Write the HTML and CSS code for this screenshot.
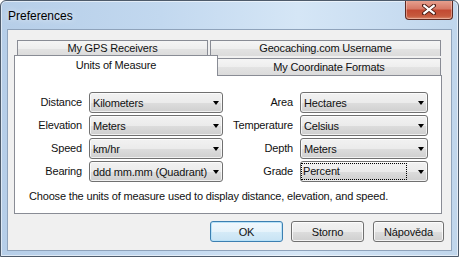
FILE: index.html
```
<!DOCTYPE html>
<html lang="cs">
<head>
  <meta charset="UTF-8">
  <title>Preferences</title>
  <meta name="viewport" content="width=device-width, initial-scale=1.0">
  <link rel="stylesheet" href="styles.css">
</head>
<body>
  <div class="window">
    <div class="titlebar">
      <span class="title">Preferences</span>
      <div class="close">
        <svg width="14" height="11" viewBox="0 0 14 11">
          <path d="M2 1.5 L12 9.5 M12 1.5 L2 9.5" stroke="#4a1a12" stroke-width="4" stroke-linecap="round"/>
          <path d="M2.3 1.8 L11.7 9.2 M11.7 1.8 L2.3 9.2" stroke="#fff" stroke-width="2.2" stroke-linecap="square"/>
        </svg>
      </div>
    </div>

    <div class="client">
      <div class="tabs">
        <div class="tab-row back">
          <div class="tab gps">My GPS Receivers</div>
          <div class="tab geo">Geocaching.com Username</div>
        </div>
        <div class="tab-row front">
          <div class="tab active units">Units of Measure</div>
          <div class="tab coords">My Coordinate Formats</div>
        </div>
        <div class="pane">
          <div class="form">
            <label>Distance</label>
            <div class="combo"><span class="val">Kilometers</span><i class="arrow"></i></div>
            <label>Area</label>
            <div class="combo narrow"><span class="val">Hectares</span><i class="arrow"></i></div>

            <label>Elevation</label>
            <div class="combo"><span class="val">Meters</span><i class="arrow"></i></div>
            <label>Temperature</label>
            <div class="combo narrow"><span class="val">Celsius</span><i class="arrow"></i></div>

            <label>Speed</label>
            <div class="combo"><span class="val">km/hr</span><i class="arrow"></i></div>
            <label>Depth</label>
            <div class="combo narrow"><span class="val">Meters</span><i class="arrow"></i></div>

            <label>Bearing</label>
            <div class="combo"><span class="val">ddd mm.mm (Quadrant)</span><i class="arrow"></i></div>
            <label>Grade</label>
            <div class="combo narrow focused"><span class="val">Percent</span><i class="arrow"></i></div>
          </div>
          <p class="hint">Choose the units of measure used to display distance, elevation, and speed.</p>
        </div>
      </div>

      <div class="buttons">
        <button class="btn default">OK</button>
        <button class="btn">Storno</button>
        <button class="btn help">Nápověda</button>
      </div>
    </div>
  </div>
</body>
</html>
```

FILE: styles.css
```
* { box-sizing: border-box; }
body { margin: 0; background: #fff; font-family: "Liberation Sans", Arial, sans-serif; font-size: 11px; letter-spacing: -0.17px; color: #111; }

.window { width: 459px; height: 257px; border: 1px solid #4e5b6b; border-radius: 6px 6px 0 0; overflow: hidden;
  background: linear-gradient(to right, #b6cee8 0%, #c2d8ef 35%, #d5e6f6 65%, #c9ddf1 85%, #c0d6ec 100%);
  box-shadow: inset 0 0 0 1px rgba(255,255,255,0.55); display: flex; flex-direction: column; }

.titlebar { height: 28px; display: flex; justify-content: space-between; align-items: center; padding: 0 5px 0 7px; }
.title { font-size: 12px; letter-spacing: 0; color: #000; text-shadow: 0 0 6px rgba(255,255,255,0.9); margin-top: 1px; }
.close { align-self: flex-start; margin-top: -1px; width: 48px; height: 20px; border: 1px solid #5e2a22; border-top: none;
  border-radius: 0 0 4px 4px; display: flex; align-items: center; justify-content: center;
  background: linear-gradient(to bottom, #e8a493 0%, #d77a67 45%, #c24a33 55%, #c65a3e 85%, #d98a6e 100%);
  box-shadow: inset 0 0 0 1px rgba(255,220,210,0.45); }

.client { height: 222px; margin: 0 6px; background: #f0f0f0; border: 1px solid #8fa3bb; }

.tabs { margin: 10px 0 0 6px; width: 428px; }
.tab-row { display: flex; }
.tab-row.back { height: 16px; padding-left: 3px; gap: 2px; }
.tab-row.front { height: 19px; align-items: flex-start; }
.tab { border: 1px solid #898c95; border-bottom: none; text-align: center; line-height: 15px;
  background: linear-gradient(to bottom, #f5f5f5 0%, #eeeeee 50%, #e3e3e3 51%, #dbdbdb 100%); white-space: nowrap; }
.tab.gps { width: 191px; height: 16px; }
.tab.geo { width: 231px; height: 16px; }
.tab.coords { width: 224px; height: 17px; margin-top: 2px; margin-left: -1px; line-height: 16px; }
.tab.active { width: 204px; height: 21px; margin-top: -1px; background: #fff; position: relative; z-index: 1; line-height: 18px; }

.pane { height: 139px; background: #fff; border: 1px solid #898c95; padding: 16px 0 0 0; }
.form { display: grid; grid-template-columns: 67px 134px 63px 128px; grid-auto-rows: 21px; column-gap: 7px; row-gap: 2px; }
.form label { text-align: right; line-height: 21px; white-space: nowrap; }

.combo { display: flex; align-items: center; border: 1px solid #707070; border-radius: 3px; padding: 0 3px 0 3px;
  background: linear-gradient(to bottom, #f2f2f2 0%, #ebebeb 50%, #dddddd 51%, #cfcfcf 100%);
  box-shadow: inset 0 0 0 1px rgba(255,255,255,0.7); }
.combo .val { flex: 1; white-space: nowrap; overflow: hidden; }
.combo .arrow { width: 0; height: 0; border-top: 4px solid #000; border-left: 3.5px solid transparent; border-right: 3.5px solid transparent; margin-left: 4px; }
.combo.focused { padding-left: 0; }
.combo.focused .val { border: 1px dotted #000; height: 17px; line-height: 15px; padding-left: 1px; margin-right: 7px; }

.hint { margin: 7px 0 0 14px; line-height: 14px; white-space: nowrap; }

.buttons { display: flex; justify-content: flex-end; margin-top: 7px; padding-right: 7px; }
.btn { width: 73px; height: 21px; margin-left: 8px; font: inherit; letter-spacing: inherit; color: #111; border: 1px solid #707070; border-radius: 3px; padding: 0;
  background: linear-gradient(to bottom, #f2f2f2 0%, #ebebeb 50%, #dddddd 51%, #cfcfcf 100%);
  box-shadow: inset 0 0 0 1px rgba(255,255,255,0.75); }
.btn.help { width: 71px; margin-left: 9px; }
.btn.default { border-color: #3c7fb1; background: linear-gradient(to bottom, #f1f8fd 0%, #e6f3fb 50%, #d6ebf8 51%, #c8e3f4 100%);
  box-shadow: inset 0 0 0 1px #b8e2f8; }
```
